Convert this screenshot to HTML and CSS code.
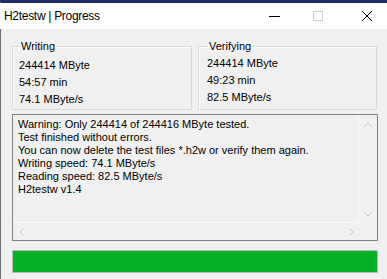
FILE: index.html
```html
<!DOCTYPE html>
<html>
<head>
<meta charset="utf-8">
<title>H2testw | Progress</title>
<link rel="stylesheet" href="styles.css">
</head>
<body>
<div class="window">
  <div class="titlebar">
    <span class="title">H2testw | Progress</span>
    <span class="spacer"></span>
    <svg class="tb-min" width="11" height="10" viewBox="0 0 11 10"><line x1="0" y1="5.5" x2="11" y2="5.5" stroke="#000" stroke-width="1"/></svg>
    <svg class="tb-max" width="10" height="10" viewBox="0 0 10 10"><rect x="0.5" y="0.5" width="9" height="9" fill="none" stroke="#cccccc" stroke-width="1"/></svg>
    <svg class="tb-close" width="10" height="10" viewBox="0 0 10 10"><path d="M0 0 L10 10 M10 0 L0 10" stroke="#000" stroke-width="1" fill="none"/></svg>
  </div>
  <div class="content">
    <div class="groups">
      <fieldset class="group group-w">
        <legend>Writing</legend>
        <div class="line">244414 MByte</div>
        <div class="line">54:57 min</div>
        <div class="line">74.1 MByte/s</div>
      </fieldset>
      <fieldset class="group group-v">
        <legend>Verifying</legend>
        <div class="line">244414 MByte</div>
        <div class="line">49:23 min</div>
        <div class="line">82.5 MByte/s</div>
      </fieldset>
    </div>
    <div class="memo">
      <div class="memo-text">
        <div>Warning: Only 244414 of 244416 MByte tested.</div>
        <div>Test finished without errors.</div>
        <div>You can now delete the test files *.h2w or verify them again.</div>
        <div>Writing speed: 74.1 MByte/s</div>
        <div>Reading speed: 82.5 MByte/s</div>
        <div>H2testw v1.4</div>
      </div>
      <div class="vscroll">
        <svg width="8" height="5" viewBox="0 0 8 5"><path d="M0.5 4.5 L4 1 L7.5 4.5" stroke="#c4c4c4" fill="none"/></svg>
        <svg width="8" height="5" viewBox="0 0 8 5"><path d="M0.5 0.5 L4 4 L7.5 0.5" stroke="#c4c4c4" fill="none"/></svg>
      </div>
      <div class="hscroll">
        <svg width="5" height="8" viewBox="0 0 5 8"><path d="M4.5 0.5 L1 4 L4.5 7.5" stroke="#c4c4c4" fill="none"/></svg>
        <svg width="5" height="8" viewBox="0 0 5 8"><path d="M0.5 0.5 L4 4 L0.5 7.5" stroke="#c4c4c4" fill="none"/></svg>
      </div>
      <div class="corner"></div>
    </div>
    <div class="progress"><div class="progress-fill" style="width:100%"></div></div>
  </div>
</div>
</body>
</html>
```

FILE: styles.css
```css
html, body {
  margin: 0;
  padding: 0;
  background: #f0f0f0;
  overflow: hidden;
}
body {
  font-family: "Liberation Sans", Arial, sans-serif;
  color: #000;
}
.window {
  width: 387px;
  height: 279px;
  box-sizing: border-box;
  border-top: 3px solid #1b2c66;
  border-left: 1px solid #6f6f6f;
  background: #f0f0f0;
}
.titlebar {
  height: 26px;
  background: #ffffff;
  display: flex;
  align-items: center;
  padding: 0 15px 0 4px;
  margin-left: -1px;
}
.title {
  font-size: 12px;
  line-height: 16px;
  letter-spacing: -0.3px;
}
.spacer { flex: 1; }
.tb-max { margin-left: 33px; }
.tb-close { margin-left: 39px; }
.content {
  padding: 11px 0 0 11px;
  width: 366px;
}
.groups {
  display: flex;
  gap: 6px;
}
.group {
  margin: 0;
  min-width: 0;
  border: 1px solid #dadada;
  box-shadow: inset 1px 1px 0 #fbfbfb;
  font-size: 11px;
  line-height: 17px;
  height: 70px;
  box-sizing: border-box;
}
.group legend {
  line-height: 13px;
  padding: 0 1px;
  margin-left: 1px;
}
.group-w {
  width: 180px;
  padding: 4px 4px 0 6px;
}
.group-v {
  width: 179px;
  padding: 2px 4px 0 8px;
}
.memo {
  margin-top: 4px;
  width: 366px;
  height: 127px;
  box-sizing: border-box;
  border: 1px solid #828282;
  display: grid;
  grid-template-columns: 1fr 18px;
  grid-template-rows: 1fr 17px;
  font-size: 11px;
  line-height: 13px;
}
.memo-text {
  overflow: hidden;
  white-space: nowrap;
  padding: 3px 0 0 5px;
  border-right: 1px solid #fafafa;
  border-bottom: 1px solid #fafafa;
}
.vscroll {
  display: flex;
  flex-direction: column;
  justify-content: space-between;
  align-items: center;
  padding: 7px 0 6px 0;
}
.hscroll {
  display: flex;
  justify-content: space-between;
  align-items: center;
  padding: 0 5px 0 6px;
}
.progress {
  margin-top: 9px;
  width: 366px;
  height: 23px;
  box-sizing: border-box;
  border: 1px solid #bcbcbc;
  background: #e6e6e6;
}
.progress-fill {
  height: 100%;
  background: #06b025;
}
```
